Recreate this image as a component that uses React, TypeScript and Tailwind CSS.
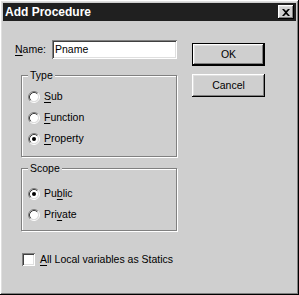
const raised =
  "shadow-[inset_-1px_-1px_#000,inset_1px_1px_#fff,inset_-2px_-2px_#808080,inset_2px_2px_#dfdfdf]";
const sunken =
  "shadow-[inset_1px_1px_#808080,inset_-1px_-1px_#fff,inset_2px_2px_#404040,inset_-2px_-2px_#dfdfdf]";

function Key({ children }: { children: string }) {
  return <span className="underline decoration-1 underline-offset-[2px]">{children}</span>;
}

function Radio({ checked }: { checked?: boolean }) {
  return (
    <svg width="12" height="12" viewBox="0 0 12 12" className="shrink-0">
      <circle cx="6" cy="6" r="4.2" fill="#fff" />
      <path d="M2.11 9.89A5.5 5.5 0 0 1 9.89 2.11" fill="none" stroke="#808080" />
      <path d="M9.89 2.11A5.5 5.5 0 0 1 2.11 9.89" fill="none" stroke="#fff" />
      <path d="M2.82 9.18A4.5 4.5 0 0 1 9.18 2.82" fill="none" stroke="#404040" />
      <path d="M9.18 2.82A4.5 4.5 0 0 1 2.82 9.18" fill="none" stroke="#dfdfdf" />
      {checked && <circle cx="6" cy="6" r="2" fill="#000" />}
    </svg>
  );
}

function Option({ checked, children }: { checked?: boolean; children: React.ReactNode }) {
  return (
    <div className="flex h-[21px] items-center gap-[4px]">
      <Radio checked={checked} />
      <span>{children}</span>
    </div>
  );
}

function Group({ title, className, children }: { title: string; className: string; children: React.ReactNode }) {
  return (
    <fieldset
      className={`ml-[6px] w-[156px] border border-[#808080] pl-[6px] shadow-[inset_1px_1px_#fff,1px_1px_#fff] ${className}`}
    >
      <legend className="bg-[#cfcfcf] px-[2px] leading-[13px]">{title}</legend>
      {children}
    </fieldset>
  );
}

export default function App() {
  return (
    <div
      className={`flex h-[295px] w-[299px] flex-col bg-[#cfcfcf] p-[3px] text-[10.5px] text-black ${raised}`}
      style={{ fontFamily: '"Liberation Sans", Arial, sans-serif' }}
    >
      <div className="flex h-[18px] items-center justify-between bg-[#202020] pl-[2px] pr-[2px]">
        <span className="text-[12px] font-bold leading-none text-white">Add Procedure</span>
        <div className={`flex h-[14px] w-[16px] items-center justify-center bg-[#cfcfcf] ${raised}`}>
          <svg width="8" height="7" viewBox="0 0 8 7">
            <path d="M0 0h2l2 2 2-2h2L5 3.5 8 7H6L4 5 2 7H0l3-3.5z" fill="#000" />
          </svg>
        </div>
      </div>

      <div className="flex pl-[12px] pt-[19px]">
        <div className="w-[162px]">
          <div className="flex h-[19px] items-center">
            <span className="w-[37px]">
              <Key>N</Key>ame:
            </span>
            <div className={`flex h-[19px] w-[125px] items-center bg-white pl-[3px] ${sunken}`}>Pname</div>
          </div>

          <Group title="Type" className="mt-[10px] pb-[7px] pt-[4px]">
            <Option>
              <Key>S</Key>ub
            </Option>
            <Option>
              <Key>F</Key>unction
            </Option>
            <Option checked>
              <Key>P</Key>roperty
            </Option>
          </Group>

          <Group title="Scope" className="mt-[5px] pb-[5px] pt-[8px]">
            <Option checked>
              Pu<Key>b</Key>lic
            </Option>
            <Option>
              Pri<Key>v</Key>ate
            </Option>
          </Group>

          <div className="ml-[7px] mt-[22px] flex h-[13px] items-center gap-[5px]">
            <div className={`h-[13px] w-[13px] shrink-0 bg-white ${sunken}`} />
            <span>
              <Key>A</Key>ll Local variables as Statics
            </span>
          </div>
        </div>

        <div className="ml-[15px] mt-[3px] flex flex-col gap-[8px]">
          <div className="h-[23px] w-[73px] border border-black">
            <div className={`flex h-full w-full items-center justify-center ${raised}`}>OK</div>
          </div>
          <div className={`flex h-[23px] w-[73px] items-center justify-center ${raised}`}>Cancel</div>
        </div>
      </div>
    </div>
  );
}
